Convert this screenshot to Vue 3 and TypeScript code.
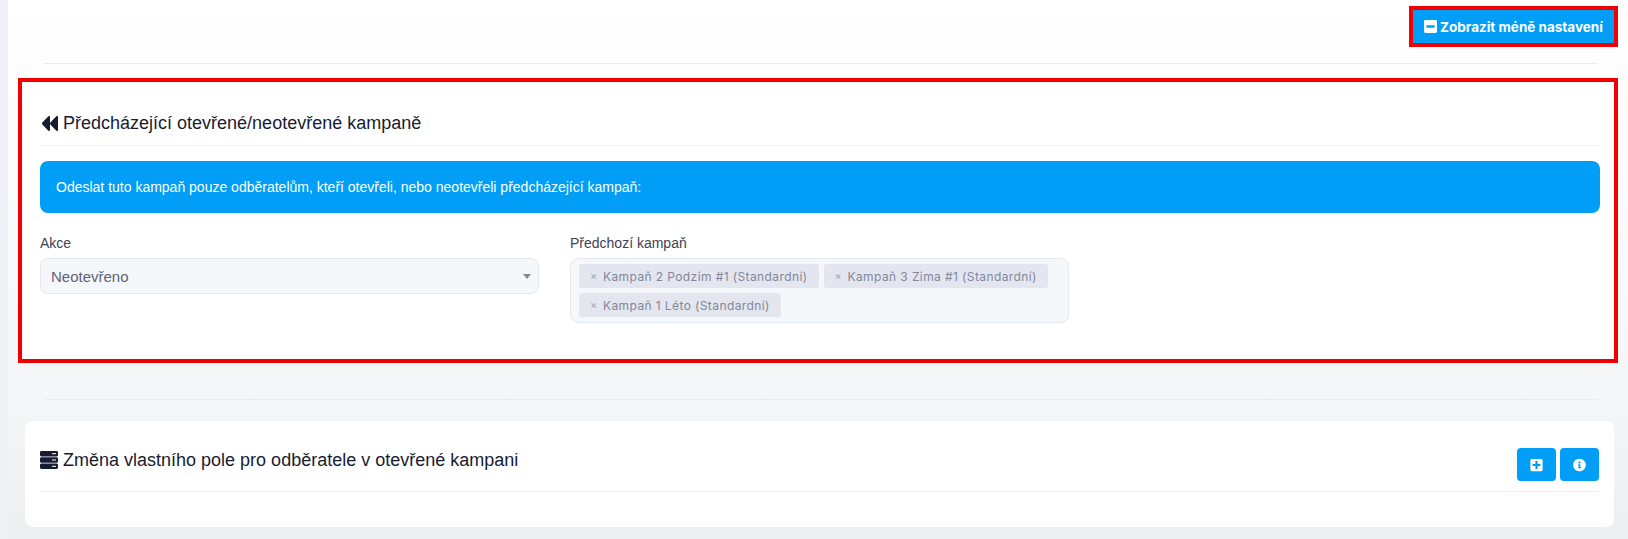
<script setup lang="ts">
const tags: string[] = ['Kampaň 2 Podzim #1 (Standardní)', 'Kampaň 3 Zima #1 (Standardní)', 'Kampaň 1 Léto (Standardní)']
</script>

<template>
  <div class="page">
    <div class="top-row">
      <div class="marked">
        <button class="btn wide">
          <svg class="ic-wide" viewBox="0 32 448 448"><path fill="#fff" d="M400 32H48C21.5 32 0 53.5 0 80v352c0 26.5 21.5 48 48 48h352c26.5 0 48-21.5 48-48V80c0-26.5-21.5-48-48-48zM92 296c-6.6 0-12-5.4-12-12v-56c0-6.6 5.4-12 12-12h264c6.6 0 12 5.4 12 12v56c0 6.6-5.4 12-12 12H92z"/></svg>
          <span>Zobrazit méně nastavení</span>
        </button>
      </div>
    </div>
    <hr class="sep first" />

    <section class="red-box">
      <div class="head">
        <h3>
          <svg class="ic-head" viewBox="0 64 512 384" preserveAspectRatio="none"><path fill="#181c32" d="M11.5 280.6l192 160c20.6 17.2 52.5 2.8 52.5-24.6V96c0-27.4-31.9-41.8-52.5-24.6l-192 160c-15.3 12.8-15.3 36.4 0 49.2zm256 0l192 160c20.6 17.2 52.5 2.8 52.5-24.6V96c0-27.4-31.9-41.8-52.5-24.6l-192 160c-15.3 12.8-15.3 36.4 0 49.2z"/></svg>
          <span>Předcházející otevřené/neotevřené kampaně</span>
        </h3>
      </div>
      <div class="alert">Odeslat tuto kampaň pouze odběratelům, kteří otevřeli, nebo neotevřeli předcházející kampaň:</div>
      <div class="fields">
        <div>
          <label>Akce</label>
          <div class="select">
            <span>Neotevřeno</span>
            <i class="caret"></i>
          </div>
        </div>
        <div>
          <label>Předchozí kampaň</label>
          <div class="multi">
            <span v-for="t in tags" :key="t" class="tag"><em>×</em>{{ t }}</span>
          </div>
        </div>
      </div>
    </section>

    <hr class="sep second" />

    <section class="card">
      <div class="card-head">
        <h3>
          <svg class="ic-server" viewBox="0 0 18 18">
            <rect x="0" y="0" width="18" height="5.4" rx="1.4" fill="#181c32" />
            <rect x="0" y="6.3" width="18" height="5.4" rx="1.4" fill="#181c32" />
            <rect x="0" y="12.6" width="18" height="5.4" rx="1.4" fill="#181c32" />
            <rect x="12" y="2.2" width="4" height="1" fill="#fff" />
            <rect x="12" y="8.5" width="4" height="1" fill="#fff" />
            <rect x="12" y="14.8" width="4" height="1" fill="#fff" />
          </svg>
          <span>Změna vlastního pole pro odběratele v otevřené kampani</span>
        </h3>
        <div class="actions">
          <button class="btn square">
            <svg class="ic-btn" viewBox="0 0 448 512"><path fill="#fff" d="M400 32H48C21.5 32 0 53.5 0 80v352c0 26.5 21.5 48 48 48h352c26.5 0 48-21.5 48-48V80c0-26.5-21.5-48-48-48zm-32 252c0 6.6-5.4 12-12 12h-92v92c0 6.6-5.4 12-12 12h-56c-6.6 0-12-5.4-12-12v-92H92c-6.6 0-12-5.4-12-12v-56c0-6.6 5.4-12 12-12h92v-92c0-6.6 5.4-12 12-12h56c6.6 0 12 5.4 12 12v92h92c6.6 0 12 5.4 12 12v56z"/></svg>
          </button>
          <button class="btn square">
            <svg class="ic-btn" viewBox="0 0 512 512"><path fill="#fff" d="M256 8C119.043 8 8 119.083 8 256c0 136.997 111.043 248 248 248s248-111.003 248-248C504 119.083 392.957 8 256 8zm0 110c23.196 0 42 18.804 42 42s-18.804 42-42 42-42-18.804-42-42 18.804-42 42-42zm56 254c0 6.627-5.373 12-12 12h-88c-6.627 0-12-5.373-12-12v-24c0-6.627 5.373-12 12-12h12v-64h-12c-6.627 0-12-5.373-12-12v-24c0-6.627 5.373-12 12-12h64c6.627 0 12 5.373 12 12v100h12c6.627 0 12 5.373 12 12v24z"/></svg>
          </button>
        </div>
      </div>
    </section>
  </div>
</template>

<style>
html, body { margin: 0; background: #eef1f5; }
</style>

<style scoped>
* { box-sizing: border-box; }
.page {
  margin-left: 8px;
  height: 539px;
  overflow: hidden;
  font-family: "Liberation Sans", Arial, sans-serif;
  background: linear-gradient(180deg, #ffffff 0%, #fbfbfc 30%, #f4f6f7 75%, #eceef0 100%);
}
.top-row { display: flex; justify-content: flex-end; padding: 6px 10px 0 0; }
.marked { border: 4px solid #f00000; display: flex; }
.btn {
  border: 0;
  background: #009ef7;
  color: #fff;
  display: flex;
  align-items: center;
  justify-content: center;
  padding: 0;
  border-radius: 4px;
}
.wide {
  width: 201px;
  height: 33px;
  border-radius: 0;
  gap: 3px;
  font: 700 13.5px Inter, "Liberation Sans", sans-serif;
}
.ic-wide { width: 13px; height: 13px; }
.ic-btn { width: 13px; height: 14px; }
.sep { border: 0; border-top: 1px solid #eaecef; margin: 0; }
.sep.first { margin: 16px 31px 0 36px; }
.sep.second { margin: 36px 31px 0 36px; }
.red-box {
  margin: 14px 10px 0;
  height: 285px;
  border: 4px solid #f00000;
  background: #fff;
  padding: 0 14px 0 18px;
}
.head { height: 64px; padding-top: 29px; border-bottom: 1px solid #eff2f5; }
h3 {
  margin: 0;
  font-size: 18px;
  font-weight: 400;
  color: #181c32;
  display: flex;
  align-items: center;
  line-height: 24px;
}
.ic-head { width: 16px; height: 15px; margin: 0 5px 0 2px; }
.ic-server { width: 18px; height: 18px; margin-right: 5px; }
.alert {
  margin-top: 15px;
  height: 52px;
  padding: 0 16px;
  display: flex;
  align-items: center;
  background: #009ef7;
  border-radius: 8px;
  color: #fff;
  font-size: 14px;
}
.fields { display: grid; grid-template-columns: 499px 499px; column-gap: 31px; margin-top: 22px; }
label { display: block; font-size: 14px; line-height: 16px; color: #3f4254; margin-bottom: 7px; }
.select {
  height: 36px;
  background: #f5f8fa;
  border: 1px solid #e4e9ee;
  border-radius: 8px;
  padding: 0 10px;
  display: flex;
  align-items: center;
  justify-content: space-between;
  font-size: 15px;
  color: #5e6278;
}
.caret { border: 4px solid transparent; border-top: 5px solid #888; border-bottom: 0; margin-right: -3px; }
.multi {
  background: #f5f8fa;
  border: 1px solid #e4e9ee;
  border-radius: 8px;
  min-height: 65px;
  padding: 5px 8px;
  display: flex;
  flex-wrap: wrap;
  gap: 5px;
  align-content: flex-start;
}
.tag {
  height: 24px;
  display: flex;
  align-items: center;
  background: #e4e6ef;
  border-radius: 3px;
  padding: 0 11px 0 11px;
  font: 400 12px Inter, "Liberation Sans", sans-serif;
  letter-spacing: 0.4px;
  color: #82869c;
}
.tag em { font-style: normal; width: 13px; font-size: 11px; color: #a1a5b7; }
.card {
  margin: 21px 14px 0 17px;
  height: 106px;
  background: #fff;
  border-radius: 8px;
  padding: 0 14px 0 15px;
}
.card-head {
  height: 71px;
  border-bottom: 1px solid #eff2f5;
  display: flex;
  justify-content: space-between;
  align-items: flex-start;
  padding-top: 27px;
}
.actions { display: flex; gap: 4px; margin-right: 1px; }
.square { width: 39px; height: 33px; }
</style>
